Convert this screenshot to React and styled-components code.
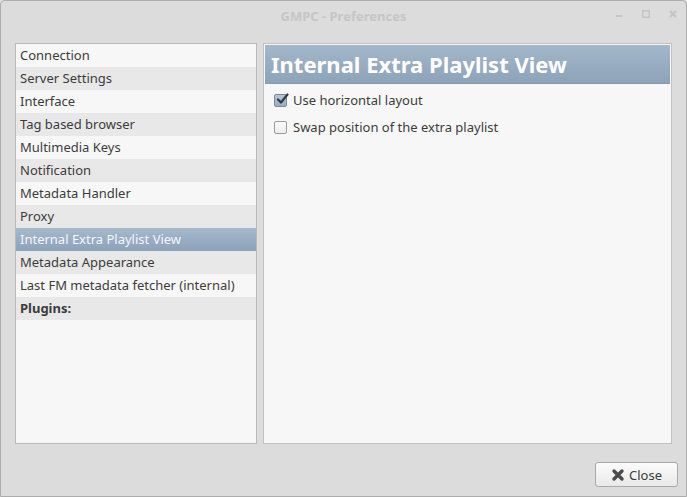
import React from "react";
import styled, { createGlobalStyle } from "styled-components";

const Global = createGlobalStyle`
  html, body { margin: 0; padding: 0; background: #dcdcdc; }
  body { font-family: "Noto Sans", "DejaVu Sans", sans-serif; }
  * { box-sizing: border-box; }
`;

const Window = styled.div`
  width: 687px;
  height: 497px;
  background: #dcdcdc;
  border: 1px solid #acacac;
  border-radius: 5px 5px 0 0;
  display: flex;
  flex-direction: column;
`;

const TitleBar = styled.div`
  height: 29px;
  position: relative;
  display: flex;
  align-items: center;
  justify-content: center;
  font-size: 13px;
  font-weight: bold;
  color: #c6c6c6;
`;

const Controls = styled.div`
  position: absolute;
  right: 9px;
  top: 9px;
  display: flex;
  gap: 19px;
  align-items: center;
`;

const Body = styled.div`
  flex: 1;
  display: flex;
  flex-direction: column;
  padding: 13px 14px 9px 14px;
`;

const Panes = styled.div`
  display: flex;
  gap: 6px;
  height: 401px;
`;

const List = styled.div`
  width: 242px;
  background: #f7f7f7;
  border: 1px solid #b9b9b9;
  display: flex;
  flex-direction: column;
`;

const Row = styled.div`
  height: 23px;
  line-height: 23px;
  padding-left: 4px;
  font-size: 13px;
  white-space: nowrap;
  color: ${(p) => (p.$selected ? "#f4f6f8" : "#3c3c3c")};
  font-weight: ${(p) => (p.$bold ? "bold" : "normal")};
  background: ${(p) =>
    p.$selected
      ? "linear-gradient(#a6b9cc, #8ca2b9)"
      : p.$odd
      ? "#e8e8e8"
      : "#f7f7f7"};
`;

const Content = styled.div`
  flex: 1;
  border: 1px solid #c2c2c2;
  background: #f7f7f7;
  padding: 1px;
  display: flex;
  flex-direction: column;
`;

const Header = styled.div`
  height: 39px;
  background: linear-gradient(#a4b7ca, #8da3b9);
  color: #ffffff;
  font-size: 22px;
  font-weight: bold;
  display: flex;
  align-items: center;
  padding-left: 6px;
  border-bottom: 1px solid #8499ae;
`;

const Options = styled.div`
  display: flex;
  flex-direction: column;
  padding: 7px 0 0 9px;
  gap: 9px;
`;

const Option = styled.label`
  display: flex;
  align-items: center;
  gap: 6px;
  height: 18px;
  font-size: 13px;
  color: #3c3c3c;
`;

const Box = styled.span`
  width: 13px;
  height: 13px;
  border: 1px solid ${(p) => (p.$checked ? "#7f8a96" : "#9a9a9a")};
  border-radius: 2px;
  background: ${(p) =>
    p.$checked ? "linear-gradient(#b6c6d6, #98adc2)" : "linear-gradient(#fbfbfb, #ececec)"};
  display: flex;
  align-items: center;
  justify-content: center;
  position: relative;
`;

const Footer = styled.div`
  flex: 1;
  display: flex;
  justify-content: flex-end;
  align-items: flex-end;
`;

const Button = styled.button`
  width: 83px;
  height: 25px;
  border: 1px solid #a9a9a9;
  border-radius: 3px;
  background: linear-gradient(#fbfbfb, #e9e9e9);
  font-family: "Noto Sans", "DejaVu Sans", sans-serif;
  font-size: 13px;
  color: #3c3c3c;
  display: flex;
  align-items: center;
  justify-content: center;
  gap: 4px;
  padding: 0;
  margin-right: -6px;
`;

const items = [
  "Connection",
  "Server Settings",
  "Interface",
  "Tag based browser",
  "Multimedia Keys",
  "Notification",
  "Metadata Handler",
  "Proxy",
  "Internal Extra Playlist View",
  "Metadata Appearance",
  "Last FM metadata fetcher (internal)",
];

const Check = () => (
  <svg width="13" height="13" viewBox="0 0 13 13" style={{ position: "absolute", left: 1, top: -2 }}>
    <path d="M2 6.5 L5 9.5 L11.5 1.5" stroke="#2f3a45" strokeWidth="2.2" fill="none" strokeLinecap="round" strokeLinejoin="round" />
  </svg>
);

export default function App() {
  return (
    <>
      <Global />
      <Window>
        <TitleBar>
          GMPC - Preferences
          <Controls>
            <svg width="8" height="8" viewBox="0 0 8 8">
              <rect x="1" y="5" width="6" height="2" fill="#c4c4c4" />
            </svg>
            <svg width="8" height="8" viewBox="0 0 8 8">
              <rect x="0.5" y="0.5" width="7" height="7" fill="none" stroke="#c4c4c4" strokeWidth="2" />
            </svg>
            <svg width="8" height="8" viewBox="0 0 8 8">
              <path d="M1 1 L7 7 M7 1 L1 7" stroke="#c4c4c4" strokeWidth="2.2" />
            </svg>
          </Controls>
        </TitleBar>
        <Body>
          <Panes>
            <List>
              {items.map((t, i) => (
                <Row key={t} $odd={i % 2 === 1} $selected={t === "Internal Extra Playlist View"}>
                  {t}
                </Row>
              ))}
              <Row $odd $bold>Plugins:</Row>
            </List>
            <Content>
              <Header>Internal Extra Playlist View</Header>
              <Options>
                <Option>
                  <Box $checked>
                    <Check />
                  </Box>
                  Use horizontal layout
                </Option>
                <Option>
                  <Box />
                  Swap position of the extra playlist
                </Option>
              </Options>
            </Content>
          </Panes>
          <Footer>
            <Button>
              <svg width="14" height="14" viewBox="0 0 14 14">
                <path d="M3 3 L11 11 M11 3 L3 11" stroke="#4a4a4a" strokeWidth="3.4" strokeLinecap="round" />
              </svg>
              Close
            </Button>
          </Footer>
        </Body>
      </Window>
    </>
  );
}
